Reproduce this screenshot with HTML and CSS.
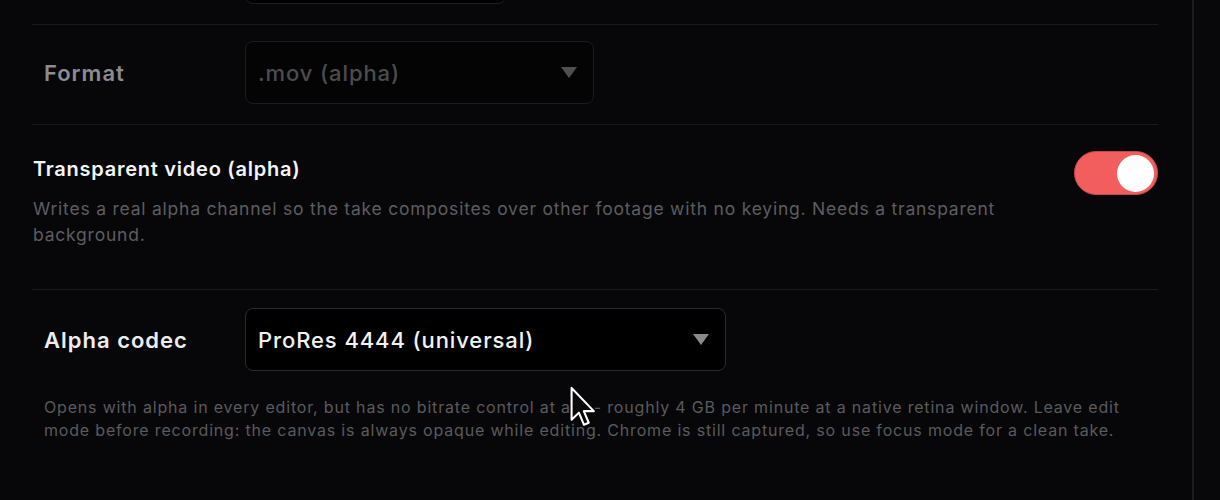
FILE: index.html
```html
<!DOCTYPE html>
<html>
<head>
  <meta charset="UTF-8">
  <title>Recording settings</title>
  <link rel="stylesheet" href="styles.css">
</head>
<body>

<div class="window">
  <main class="panel">
    <div class="settings">

      <!-- previous row, scrolled mostly out of view -->
      <div class="row row-prev">
        <span class="row-label"></span>
        <div class="select select-sm"></div>
      </div>

      <div class="row is-disabled">
        <span class="row-label">Format</span>
        <div class="select select-md">
          <span class="select-value">.mov (alpha)</span>
          <span class="select-arrow"></span>
        </div>
      </div>

      <div class="toggle-row">
        <div class="toggle-text">
          <div class="toggle-title">Transparent video (alpha)</div>
          <div class="toggle-desc">Writes a real alpha channel so the take composites over other footage with no keying. Needs a transparent background.</div>
        </div>
        <div class="switch is-on"><span class="switch-knob"></span></div>
      </div>

      <div class="row row-last">
        <span class="row-label">Alpha codec</span>
        <div class="select select-lg">
          <span class="select-value">ProRes 4444 (universal)</span>
          <span class="select-arrow"></span>
        </div>
      </div>

      <p class="help">Opens with alpha in every editor, but has no bitrate control at all -- roughly 4 GB per minute at a native retina window. Leave edit mode before recording: the canvas is always opaque while editing. Chrome is still captured, so use focus mode for a clean take.</p>

    </div>
  </main>
  <aside class="sidebar"></aside>
</div>

<!-- mouse pointer in the capture -->
<svg class="cursor" width="27" height="42" viewBox="0 0 17 26">
  <path d="M1 1 L1 21 L5.6 16.6 L8.8 24.2 L11.8 22.9 L8.7 15.6 L15 15.6 Z" fill="#0a0a0a" stroke="#fff" stroke-width="1.3" stroke-linejoin="round"/>
</svg>

</body>
</html>
```

FILE: styles.css
```css
body {
  margin: 0;
  background: #070709;
  font-family: "Inter", "Roboto", sans-serif;
  overflow: hidden;
}
.window {
  display: flex;
  height: 500px;
}
.panel {
  width: 1192px;
  border-right: 2px solid #1c1c1f;
}
.sidebar {
  flex: 1;
  background: #08080a;
}
.settings {
  margin-top: -75px;
  padding: 0 34px 0 32px;
}

/* label + dropdown rows */
.row {
  display: flex;
  align-items: center;
  padding: 16px 0 20px;
  border-bottom: 1px solid #1a1a1d;
}
.row-last {
  border-bottom: none;
  padding: 18px 0 0;
}
.row-label {
  width: 213px;
  padding-left: 12px;
  box-sizing: border-box;
  font-size: 22px;
  font-weight: 600;
  letter-spacing: 1px;
  color: #ededed;
}
.select {
  display: flex;
  align-items: center;
  height: 63px;
  box-sizing: border-box;
  padding: 0 16px 0 12px;
  background: #000;
  border: 1px solid #2a2a2d;
  border-radius: 8px;
}
.select-sm { width: 261px; }
.select-md { width: 349px; }
.select-lg { width: 481px; }
.select-value {
  font-size: 22px;
  font-weight: 500;
  letter-spacing: 0.9px;
  color: #f2f2f2;
}
.select-arrow {
  margin-left: auto;
  width: 0;
  height: 0;
  border-left: 8px solid transparent;
  border-right: 8px solid transparent;
  border-top: 11px solid #8a8a8a;
}
.row-prev .select { border-color: #1e1e20; }
.is-disabled .row-label { color: #8c8c8e; }
.is-disabled .select {
  background: #040405;
  border-color: #1c1c1e;
}
.is-disabled .select-value { color: #4c4c4e; }
.is-disabled .select-arrow { border-top-color: #505052; }

/* toggle row */
.toggle-row {
  display: flex;
  align-items: flex-start;
  gap: 32px;
  padding: 26px 0 41px 1px;
  border-bottom: 1px solid #1a1a1d;
}
.toggle-text {
  flex: 1;
  padding-top: 5px;
}
.toggle-title {
  font-size: 20px;
  font-weight: 600;
  line-height: 26px;
  letter-spacing: 0.75px;
  color: #f4f4f4;
}
.toggle-desc {
  margin-top: 14px;
  font-size: 17.5px;
  line-height: 26px;
  letter-spacing: 0.78px;
  color: #5d5d60;
}
.switch {
  display: flex;
  justify-content: flex-end;
  align-items: center;
  width: 84px;
  height: 44px;
  box-sizing: border-box;
  padding: 0 3px;
  border-radius: 22px;
  background: #f25d5d;
  border: 1px solid #c44a4a;
}
.switch-knob {
  width: 37px;
  height: 37px;
  border-radius: 50%;
  background: #fff;
}

.help {
  margin: 25px 0 0;
  padding: 0 14px 0 12px;
  font-size: 16px;
  line-height: 23px;
  letter-spacing: 0.82px;
  color: #5a5a5d;
}

.cursor {
  position: absolute;
  left: 570px;
  top: 386px;
}
```
